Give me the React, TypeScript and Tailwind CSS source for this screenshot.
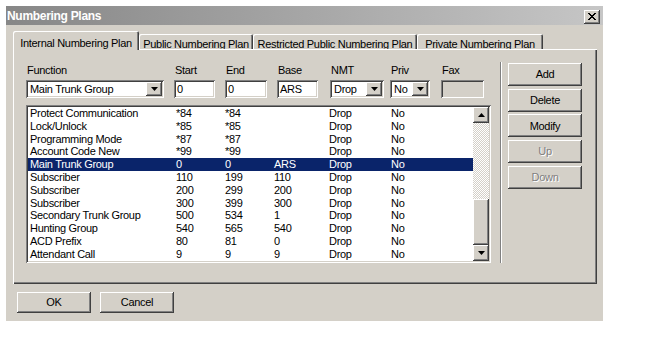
const raised =
  'shadow-[inset_-1px_-1px_#404040,inset_1px_1px_#ffffff,inset_-2px_-2px_#808080,inset_2px_2px_#d4d0c8]';
const sunken =
  'shadow-[inset_1px_1px_#808080,inset_-1px_-1px_#ffffff,inset_2px_2px_#404040,inset_-2px_-2px_#d4d0c8]';

type Row = { fn: string; start: string; end: string; base: string; nmt: string; priv: string };

const rows: Row[] = [
  { fn: 'Protect Communication', start: '*84', end: '*84', base: '', nmt: 'Drop', priv: 'No' },
  { fn: 'Lock/Unlock', start: '*85', end: '*85', base: '', nmt: 'Drop', priv: 'No' },
  { fn: 'Programming Mode', start: '*87', end: '*87', base: '', nmt: 'Drop', priv: 'No' },
  { fn: 'Account Code New', start: '*99', end: '*99', base: '', nmt: 'Drop', priv: 'No' },
  { fn: 'Main Trunk Group', start: '0', end: '0', base: 'ARS', nmt: 'Drop', priv: 'No' },
  { fn: 'Subscriber', start: '110', end: '199', base: '110', nmt: 'Drop', priv: 'No' },
  { fn: 'Subscriber', start: '200', end: '299', base: '200', nmt: 'Drop', priv: 'No' },
  { fn: 'Subscriber', start: '300', end: '399', base: '300', nmt: 'Drop', priv: 'No' },
  { fn: 'Secondary Trunk Group', start: '500', end: '534', base: '1', nmt: 'Drop', priv: 'No' },
  { fn: 'Hunting Group', start: '540', end: '565', base: '540', nmt: 'Drop', priv: 'No' },
  { fn: 'ACD Prefix', start: '80', end: '81', base: '0', nmt: 'Drop', priv: 'No' },
  { fn: 'Attendant Call', start: '9', end: '9', base: '9', nmt: 'Drop', priv: 'No' },
];

function Arrow({ up }: { up?: boolean }) {
  return (
    <svg width="7" height="4" viewBox="0 0 7 4" className="block">
      <path d={up ? 'M3.5 0L7 4H0z' : 'M0 0h7L3.5 4z'} fill="#000" />
    </svg>
  );
}

function Combo({ value, className }: { value: string; className: string }) {
  return (
    <div className={`${sunken} ${className} flex h-[18px] items-center bg-white pl-[4px] pr-[2px]`}>
      <span className="flex-1 leading-[13px]">{value}</span>
      <div className={`${raised} flex h-[14px] w-[16px] items-center justify-center bg-[#d4d0c8]`}>
        <Arrow />
      </div>
    </div>
  );
}

function Field({
  label,
  className,
  children,
}: {
  label: string;
  className: string;
  children: React.ReactNode;
}) {
  return (
    <div className={`flex flex-col ${className}`}>
      <span className="mb-[3px] h-[13px] pl-[1px] leading-[13px]">{label}</span>
      {children}
    </div>
  );
}

function Button({ label, disabled }: { label: string; disabled?: boolean }) {
  return (
    <div
      className={`${raised} flex h-[23px] w-[74px] items-center justify-center bg-[#d4d0c8] ${
        disabled ? 'text-[#808080] [text-shadow:1px_1px_0_#ffffff]' : 'text-black'
      }`}
    >
      {label}
    </div>
  );
}

export default function App() {
  return (
    <div className="h-[340px] w-[650px] bg-white pl-[6px] pt-[6px] font-['Liberation_Sans',Arial,sans-serif] text-[11px] tracking-[-0.3px] text-black">
      <div className="flex h-[315px] w-[597px] flex-col bg-[#d4d0c8]">
        {/* title bar */}
        <div className="flex h-[19px] items-center justify-between bg-linear-to-r from-[#878787] to-[#c6c6c6] pl-[1px] pr-[3px]">
          <span className="text-[12px] font-bold text-white">Numbering Plans</span>
          <div className={`${raised} mt-[2px] flex h-[14px] w-[16px] items-center justify-center bg-[#d4d0c8]`}>
            <svg width="8" height="7" viewBox="0 0 8 7" className="block">
              <path
                d="M0 0h2v1h1v1h2V1h1V0h2v1H7v1H6v1H5v1h1v1h1v1h1v1H6V6H5V5H3v1H2v1H0V6h1V5h1V4h1V3H2V2H1V1H0z"
                fill="#000"
              />
            </svg>
          </div>
        </div>

        <div className="flex flex-col pl-[7px] pr-[6px] pt-[6px]">
          {/* tabs */}
          <div className="flex h-[18px] items-end">
            <div className="relative z-10 -mb-px flex h-[19px] w-[126px] justify-center rounded-t-[2px] bg-[#d4d0c8] pt-[4px] shadow-[inset_1px_1px_#ffffff,inset_-1px_0_#404040,inset_-2px_0_#808080]">
              Internal Numbering Plan
            </div>
            <div className="flex h-[15px] w-[114px] justify-center rounded-t-[2px] pt-[2px] shadow-[inset_1px_1px_#ffffff,inset_-1px_0_#404040,inset_-2px_0_#808080]">
              Public Numbering Plan
            </div>
            <div className="flex h-[15px] w-[164px] justify-center rounded-t-[2px] pt-[2px] shadow-[inset_1px_1px_#ffffff,inset_-1px_0_#404040,inset_-2px_0_#808080]">
              Restricted Public Numbering Plan
            </div>
            <div className="flex h-[15px] w-[126px] justify-center rounded-t-[2px] pt-[2px] shadow-[inset_1px_1px_#ffffff,inset_-1px_0_#404040,inset_-2px_0_#808080]">
              Private Numbering Plan
            </div>
          </div>

          {/* tab panel */}
          <div className="flex h-[235px] w-[584px] pl-[13px] pt-[15px] shadow-[inset_1px_1px_#ffffff,inset_-1px_-1px_#404040,inset_-2px_-2px_#808080]">
            <div className="flex w-[465px] flex-col">
              <div className="flex">
                <Field label="Function" className="w-[138px]">
                  <Combo value="Main Trunk Group" className="w-[138px]" />
                </Field>
                <Field label="Start" className="ml-[10px] w-[41px]">
                  <div className={`${sunken} flex h-[18px] items-center bg-white pl-[3px]`}>0</div>
                </Field>
                <Field label="End" className="ml-[10px] w-[42px]">
                  <div className={`${sunken} flex h-[18px] items-center bg-white pl-[3px]`}>0</div>
                </Field>
                <Field label="Base" className="ml-[10px] w-[41px]">
                  <div className={`${sunken} flex h-[18px] items-center bg-white pl-[3px]`}>ARS</div>
                </Field>
                <Field label="NMT" className="ml-[12px] w-[54px]">
                  <Combo value="Drop" className="w-[54px]" />
                </Field>
                <Field label="Priv" className="ml-[6px] w-[40px]">
                  <Combo value="No" className="w-[40px]" />
                </Field>
                <Field label="Fax" className="ml-[11px] w-[43px]">
                  <div className={`${sunken} h-[18px] bg-[#d4d0c8]`} />
                </Field>
              </div>

              {/* list */}
              <div className={`${sunken} mt-[7px] flex h-[158px] bg-white p-[2px]`}>
                <div className="flex flex-1 flex-col">
                  {rows.map((r, i) => (
                    <div
                      key={i}
                      className={`grid h-[12.8px] grid-cols-[146px_49px_49px_55px_62px_1fr] pl-[2px] leading-[12.8px] ${
                        i === 4 ? 'bg-[#0a246a] text-white' : ''
                      }`}
                    >
                      <span>{r.fn}</span>
                      <span>{r.start}</span>
                      <span>{r.end}</span>
                      <span>{r.base}</span>
                      <span>{r.nmt}</span>
                      <span>{r.priv}</span>
                    </div>
                  ))}
                </div>
                <div className="flex w-[16px] flex-col">
                  <div className={`${raised} flex h-[16px] items-center justify-center bg-[#d4d0c8]`}>
                    <Arrow up />
                  </div>
                  <div className="flex-1 bg-[image:repeating-conic-gradient(#d4d0c8_0%_25%,#ffffff_0%_50%)] bg-[length:2px_2px]" />
                  <div className={`${raised} h-[46px] bg-[#d4d0c8]`} />
                  <div className={`${raised} flex h-[16px] items-center justify-center bg-[#d4d0c8]`}>
                    <Arrow />
                  </div>
                </div>
              </div>
            </div>

            {/* separator */}
            <div className="ml-[9px] mt-[-2px] h-[201px] w-[2px] shadow-[inset_1px_0_#808080,inset_-1px_0_#ffffff]" />

            {/* side buttons */}
            <div className="ml-[6px] mt-[-1px] flex flex-col gap-[2.7px]">
              <Button label="Add" />
              <Button label="Delete" />
              <Button label="Modify" />
              <Button label="Up" disabled />
              <Button label="Down" disabled />
            </div>
          </div>

          {/* bottom buttons */}
          <div className="ml-[4px] mt-[8px] flex gap-[9px]">
            <div className={`${raised} flex h-[21px] w-[74px] items-center justify-center bg-[#d4d0c8]`}>OK</div>
            <div className={`${raised} flex h-[21px] w-[74px] items-center justify-center bg-[#d4d0c8]`}>
              Cancel
            </div>
          </div>
        </div>
      </div>
    </div>
  );
}
